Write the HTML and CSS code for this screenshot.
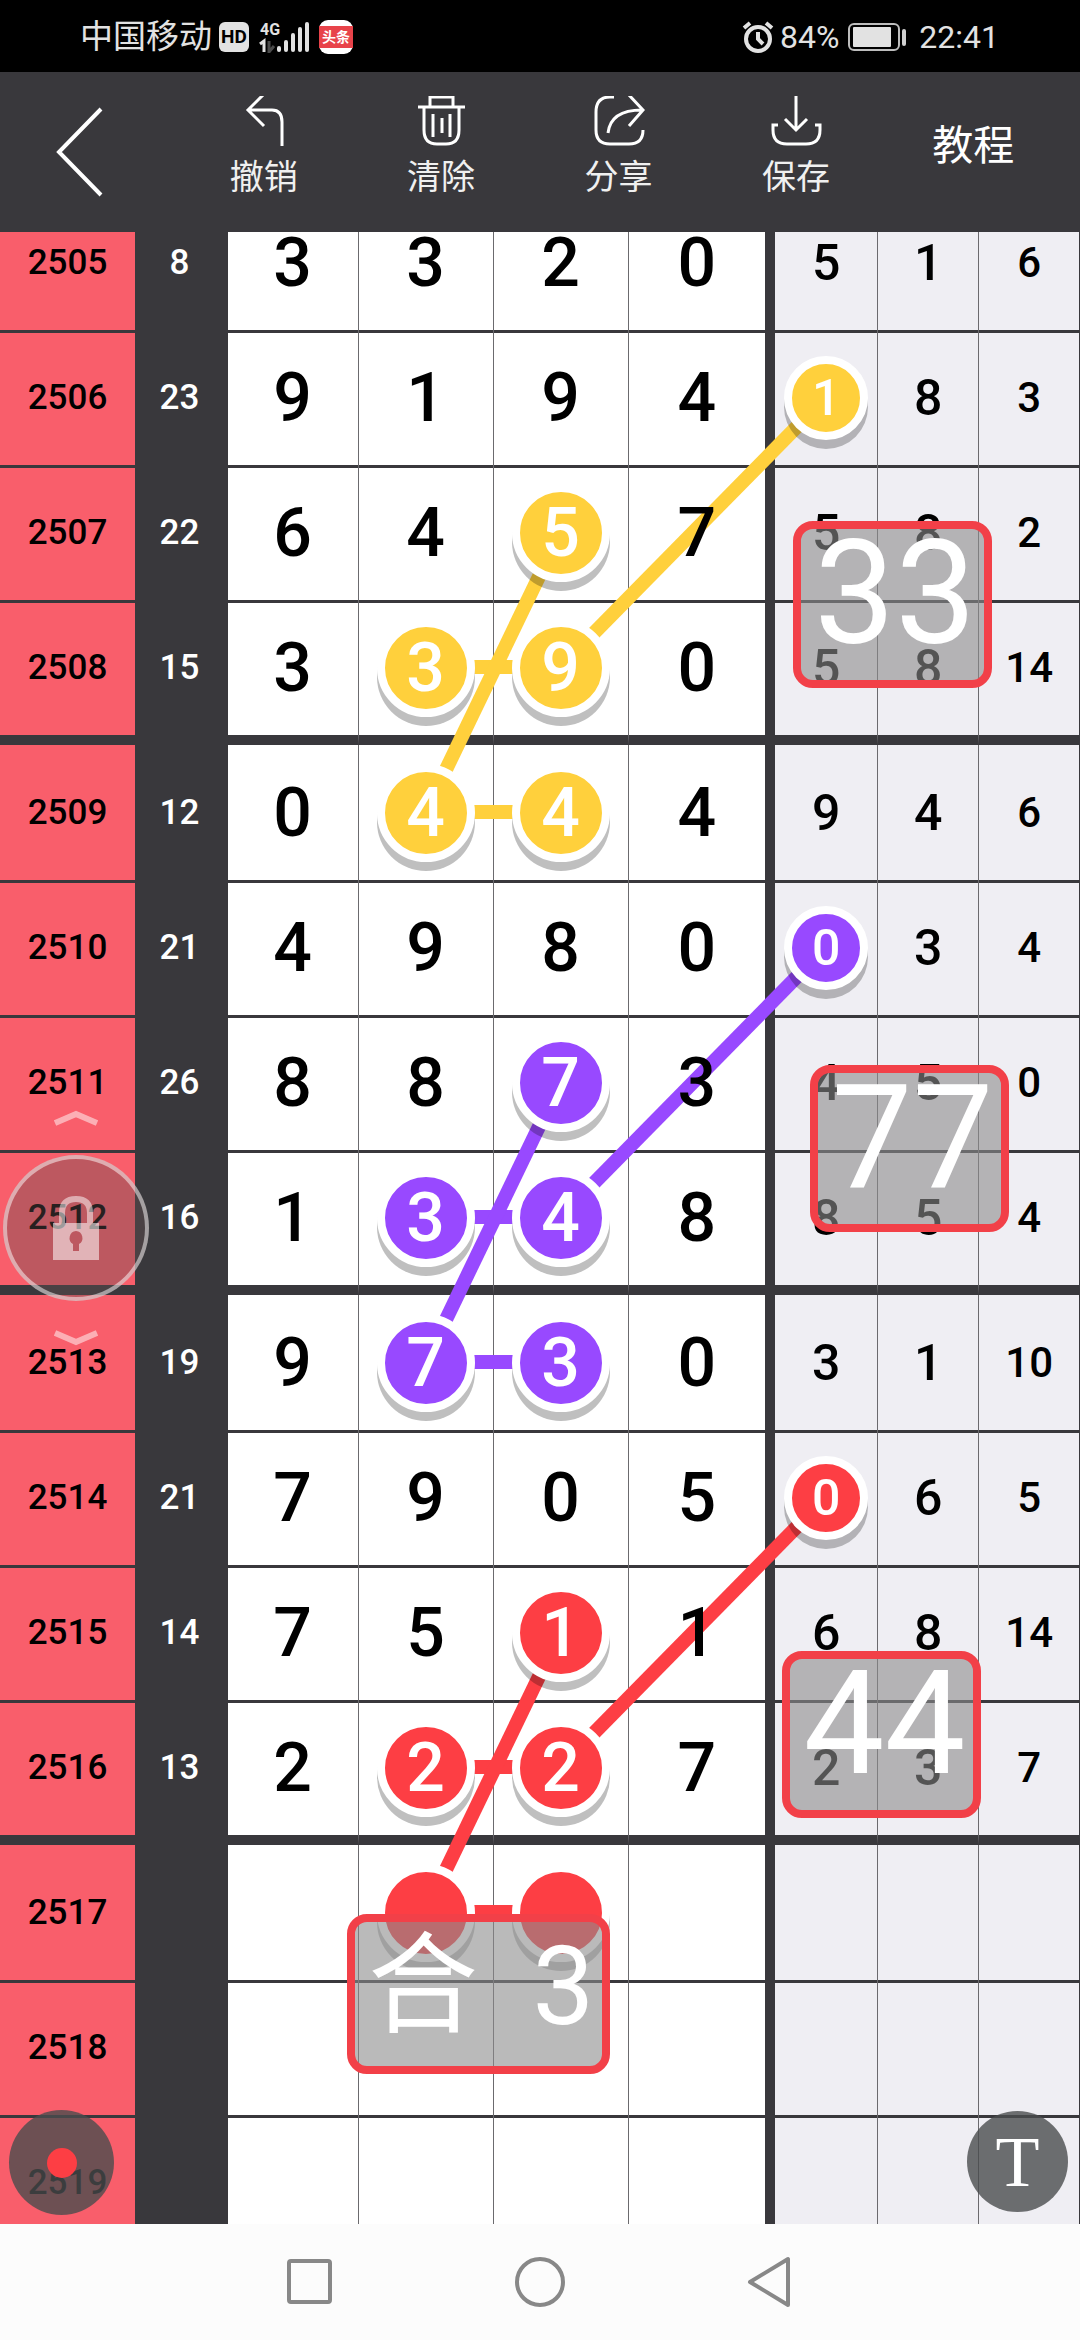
FILE: index.html
```html
<!DOCTYPE html>
<html lang="zh-CN">
<head>
<meta charset="utf-8">
<meta name="viewport" content="width=device-width, initial-scale=1">
<title>走势图</title>
<link rel="stylesheet" href="styles.css">
</head>
<body>
<div class="status">
  <div class="status-side">
    <span class="carrier">中国移动</span>
    <span class="hd">HD</span>
    <svg class="signal" width="52" height="32" viewBox="0 0 52 32" aria-hidden="true">
      <text x="1" y="14" class="signal-net">4G</text>
      <path d="M1 23L5 20V31" fill="none" stroke="#e2e2e2" stroke-width="3"/>
      <path d="M10 20V31L15 25" fill="none" stroke="#4a4a4a" stroke-width="3"/>
      <path d="M20 27V29M27 21V29M34 14V29M41 8V29M48 3V29" stroke="#e2e2e2" stroke-width="4" stroke-linecap="round"/>
    </svg>
    <span class="app-badge"><span>头条</span></span>
  </div>
  <div class="status-side">
    <svg width="32" height="34" viewBox="0 0 32 34" fill="none" stroke="#e2e2e2" aria-hidden="true">
      <circle cx="16" cy="19" r="12" stroke-width="4"/>
      <path d="M16 12V19L21 24" stroke-width="4"/>
      <path d="M2 8L8 3M24 3L30 8" stroke-width="4"/>
    </svg>
    <span class="percent">84%</span>
    <svg class="battery" width="60" height="28" viewBox="0 0 60 28" aria-hidden="true">
      <rect x="2" y="1" width="50" height="26" rx="5" fill="none" stroke="#bdbdbd" stroke-width="2"/>
      <rect x="6" y="4" width="38" height="20" rx="1" fill="#e2e2e2"/>
      <rect x="55" y="6" width="4" height="17" rx="2" fill="#d0d0d0"/>
    </svg>
    <span>22:41</span>
  </div>
</div>

<header class="toolbar">
  <button class="back" aria-label="返回">
    <svg width="48" height="90" viewBox="0 0 48 90"><path d="M45 2L3 45L45 88"/></svg>
  </button>
  <button class="tool">
    <svg width="52" height="50" viewBox="0 0 52 50"><path d="M26 -2L10 14L26 30M10 14H34Q44 14 44 26V50"/></svg>
    <span>撤销</span>
  </button>
  <button class="tool">
    <svg width="52" height="50" viewBox="0 0 52 50"><path d="M3 11H50M15 11V1H38V11M9 11V34Q9 48 22 48H31Q44 48 44 34V11M18 18V41M27 22V37M35 18V41"/></svg>
    <span>清除</span>
  </button>
  <button class="tool">
    <svg width="52" height="50" viewBox="0 0 52 50"><path d="M21 1H17Q3 1 3 16V34Q3 48 17 48H36Q50 48 50 34M15 37C17 20 30 14 49 14M35 -2L50 14L36 30"/></svg>
    <span>分享</span>
  </button>
  <button class="tool">
    <svg width="52" height="50" viewBox="0 0 52 50"><path d="M26 0V34M15 23L26 34L37 23M8 29H3V34Q3 48 17 48H36Q50 48 50 34V29H45"/></svg>
    <span>保存</span>
  </button>
  <button class="tool guide">教程</button>
</header>

<main class="sheet">
  <div class="canvas">
    <table class="chart">
      <colgroup>
        <col class="w-id"><col class="w-sum"><col class="w-first"><col class="w-digit"><col class="w-digit"><col class="w-fourth"><col class="w-fifth"><col class="w-sixth"><col class="w-last">
      </colgroup>
      <tbody>
        <tr><th scope="row"><span>2505</span></th><td><span>8</span></td><td><span>3</span></td><td><span>3</span></td><td><span>2</span></td><td><span>0</span></td><td><span>5</span></td><td><span>1</span></td><td><span>6</span></td></tr>
        <tr><th scope="row"><span>2506</span></th><td><span>23</span></td><td><span>9</span></td><td><span>1</span></td><td><span>9</span></td><td><span>4</span></td><td class="hit yellow"><i class="ball small"></i><span>1</span></td><td><span>8</span></td><td><span>3</span></td></tr>
        <tr><th scope="row"><span>2507</span></th><td><span>22</span></td><td><span>6</span></td><td><span>4</span></td><td class="hit yellow"><i class="ball"></i><span>5</span></td><td><span>7</span></td><td><span>5</span></td><td><span>8</span></td><td><span>2</span></td></tr>
        <tr><th scope="row"><span>2508</span></th><td><span>15</span></td><td><span>3</span></td><td class="hit yellow"><i class="ball low"></i><span>3</span></td><td class="hit yellow"><i class="ball low"></i><span>9</span></td><td><span>0</span></td><td><span>5</span></td><td><span>8</span></td><td><span>14</span></td></tr>
      </tbody>
      <tbody>
        <tr><th scope="row"><span>2509</span></th><td><span>12</span></td><td><span>0</span></td><td class="hit yellow"><i class="ball"></i><span>4</span></td><td class="hit yellow"><i class="ball"></i><span>4</span></td><td><span>4</span></td><td><span>9</span></td><td><span>4</span></td><td><span>6</span></td></tr>
        <tr><th scope="row"><span>2510</span></th><td><span>21</span></td><td><span>4</span></td><td><span>9</span></td><td><span>8</span></td><td><span>0</span></td><td class="hit purple"><i class="ball small"></i><span>0</span></td><td><span>3</span></td><td><span>4</span></td></tr>
        <tr><th scope="row"><span>2511</span></th><td><span>26</span></td><td><span>8</span></td><td><span>8</span></td><td class="hit purple"><i class="ball"></i><span>7</span></td><td><span>3</span></td><td><span>4</span></td><td><span>5</span></td><td><span>0</span></td></tr>
        <tr><th scope="row"><span>2512</span></th><td><span>16</span></td><td><span>1</span></td><td class="hit purple"><i class="ball low"></i><span>3</span></td><td class="hit purple"><i class="ball low"></i><span>4</span></td><td><span>8</span></td><td><span>8</span></td><td><span>5</span></td><td><span>4</span></td></tr>
      </tbody>
      <tbody>
        <tr><th scope="row"><span>2513</span></th><td><span>19</span></td><td><span>9</span></td><td class="hit purple"><i class="ball"></i><span>7</span></td><td class="hit purple"><i class="ball"></i><span>3</span></td><td><span>0</span></td><td><span>3</span></td><td><span>1</span></td><td><span>10</span></td></tr>
        <tr><th scope="row"><span>2514</span></th><td><span>21</span></td><td><span>7</span></td><td><span>9</span></td><td><span>0</span></td><td><span>5</span></td><td class="hit red"><i class="ball small"></i><span>0</span></td><td><span>6</span></td><td><span>5</span></td></tr>
        <tr><th scope="row"><span>2515</span></th><td><span>14</span></td><td><span>7</span></td><td><span>5</span></td><td class="hit red"><i class="ball"></i><span>1</span></td><td><span>1</span></td><td><span>6</span></td><td><span>8</span></td><td><span>14</span></td></tr>
        <tr><th scope="row"><span>2516</span></th><td><span>13</span></td><td><span>2</span></td><td class="hit red"><i class="ball low"></i><span>2</span></td><td class="hit red"><i class="ball low"></i><span>2</span></td><td><span>7</span></td><td><span>2</span></td><td><span>3</span></td><td><span>7</span></td></tr>
      </tbody>
      <tbody>
        <tr><th scope="row"><span>2517</span></th><td></td><td></td><td class="hit red"><i class="ball"></i></td><td class="hit red"><i class="ball"></i></td><td></td><td></td><td></td><td></td></tr>
        <tr><th scope="row"><span>2518</span></th><td></td><td></td><td></td><td></td><td></td><td></td><td></td><td></td></tr>
        <tr><th scope="row"><span>2519</span></th><td></td><td></td><td></td><td></td><td></td><td></td><td></td><td></td></tr>
      </tbody>
    </table>

    <svg class="links links-back" aria-hidden="true">
      <g class="yellow"><line x1="76.5%" y1="202" x2="51.9%" y2="472"/><line x1="39.4%" y1="472" x2="51.9%" y2="472"/><line x1="39.4%" y1="617" x2="51.9%" y2="617"/></g>
      <g class="purple" transform="translate(0 550)"><line x1="76.5%" y1="202" x2="51.9%" y2="472"/><line x1="39.4%" y1="472" x2="51.9%" y2="472"/><line x1="39.4%" y1="617" x2="51.9%" y2="617"/></g>
      <g class="red" transform="translate(0 1100)"><line x1="76.5%" y1="202" x2="51.9%" y2="472"/><line x1="39.4%" y1="472" x2="51.9%" y2="472"/><line x1="39.4%" y1="617" x2="51.9%" y2="617"/></g>
    </svg>
    <svg class="links links-front" aria-hidden="true">
      <line class="yellow" x1="51.9%" y1="337" x2="39.4%" y2="617"/>
      <line class="purple" x1="51.9%" y1="887" x2="39.4%" y2="1167"/>
      <line class="red" x1="51.9%" y1="1437" x2="39.4%" y2="1717"/>
    </svg>

    <div class="note note-a">33</div>
    <div class="note note-b">77</div>
    <div class="note note-c">44</div>
    <div class="note note-d">合&nbsp;&nbsp;3</div>
  </div>

  <div class="lock">
    <svg width="44" height="18" viewBox="0 0 44 18"><path d="M1 13L22 4L43 13"/></svg>
    <button aria-label="锁定">
      <svg width="46" height="64" viewBox="0 0 46 64">
        <path class="shackle" d="M9 27V17Q9 3 23 3Q37 3 37 17V27"/>
        <path class="body" fill-rule="evenodd" d="M0 27H46V64H0ZM23 35A7 7 0 0 0 20 48V55H26V48A7 7 0 0 0 23 35Z"/>
      </svg>
    </button>
    <svg width="44" height="18" viewBox="0 0 44 18"><path d="M1 5L22 14L43 5"/></svg>
  </div>
  <button class="round record" aria-label="画笔颜色"><i></i></button>
  <button class="round type" aria-label="添加文字">T</button>
</main>

<nav class="system">
  <button aria-label="最近任务"><svg width="50" height="54" viewBox="0 0 50 54"><rect x="4" y="6" width="41" height="41" rx="2"/></svg></button>
  <button aria-label="主页"><svg width="50" height="54" viewBox="0 0 50 54"><circle cx="25" cy="27" r="23"/></svg></button>
  <button aria-label="返回"><svg width="50" height="54" viewBox="0 0 50 54"><path d="M5 27L43 4V50Z"/></svg></button>
</nav>
</body>
</html>
```
FILE: styles.css
```css
:root {
  --dark: #39383c;
  --pink: #f95e6b;
  --yellow: #ffd03c;
  --purple: #9849ff;
  --red: #fd3e44;
}

* {
  box-sizing: border-box;
}

body {
  margin: 0;
  height: 100vh;
  display: flex;
  flex-direction: column;
  overflow: hidden;
  background: var(--dark);
  font-family: Roboto, "Noto Sans CJK SC", sans-serif;
}

button {
  margin: 0;
  padding: 0;
  border: 0;
  background: none;
  color: inherit;
  font: inherit;
}

svg {
  display: block;
}

/* Status bar */
.status {
  flex: none;
  height: 72px;
  padding: 2px 81px 0 80px;
  display: flex;
  align-items: center;
  justify-content: space-between;
  background: #000;
  color: #e2e2e2;
  font-size: 32px;
  line-height: 40px;
}

.status-side {
  display: flex;
  align-items: center;
}

.carrier {
  font-size: 33px;
}

.hd {
  width: 30px;
  height: 30px;
  margin: 0 10px 0 7px;
  border-radius: 6px;
  background: #e2e2e2;
  color: #000;
  font-size: 19px;
  font-weight: 700;
  line-height: 30px;
  text-align: center;
}

.signal-net {
  fill: #e2e2e2;
  font-size: 16px;
  font-weight: 700;
}

.app-badge {
  width: 34px;
  height: 34px;
  margin-left: 8px;
  padding: 6px 0;
  border-radius: 9px;
  background: #fff;
  text-align: center;
}

.app-badge span {
  display: block;
  background: #e8434a;
  color: #fff;
  font-size: 14px;
  font-weight: 700;
  line-height: 22px;
}

.percent {
  margin-left: 6px;
}

.battery {
  margin: 0 12px 0 8px;
}

/* Toolbar */
.toolbar {
  flex: none;
  height: 160px;
  padding-right: 18px;
  display: flex;
  color: #fff;
}

.toolbar svg {
  fill: none;
  stroke: #fff;
  stroke-width: 3px;
}

.toolbar .back svg {
  stroke-width: 4px;
}

.back {
  width: 175px;
  padding: 0 0 0 56px;
}

.tool {
  flex: 1;
  padding-top: 24px;
  display: flex;
  flex-direction: column;
  align-items: center;
  gap: 13px;
  color: #f0f0f0;
  font-size: 34px;
  line-height: 36px;
}

.guide {
  padding: 0 0 12px;
  justify-content: center;
  color: #fff;
  font-size: 41px;
}

/* Chart */
.sheet {
  flex: 1;
  min-height: 0;
  position: relative;
  overflow: hidden;
}

.canvas {
  position: relative;
  margin-top: -37px;
}

.chart {
  width: 100%;
  table-layout: fixed;
  border-collapse: separate;
  border-spacing: 0;
}

.w-id { width: 12.5%; }
.w-sum { width: 8.6%; }
.w-first { width: 12.1%; }
.w-digit { width: 12.5%; }
.w-fourth { width: 13.6%; }
.w-fifth { width: 9.5%; }
.w-sixth { width: 9.4%; }
.w-last { width: 9.3%; }

.chart th,
.chart td {
  position: relative;
  height: 135px;
  padding: 0;
  background: #fff;
  border-right: 1px solid #6b6a6e;
  color: #000;
  font-size: 68px;
  font-weight: 500;
  line-height: 1;
  text-align: center;
  vertical-align: middle;
}

.chart th {
  background: var(--pink);
  border-right: 0;
  font-size: 35px;
}

.chart td:nth-child(2) {
  padding-right: 4px;
  background: var(--dark);
  border-right: 0;
  color: #fff;
  font-size: 35px;
}

.chart td:nth-child(6) {
  border-right: 10px solid var(--dark);
}

.chart td:nth-child(n+7) {
  background: #efeef3;
  font-size: 50px;
}

.chart td:nth-child(9) {
  border-right-color: var(--dark);
  font-size: 42px;
}

.chart tr:not(:first-child) > * {
  box-shadow: inset 0 3px var(--dark);
}

.chart tbody:not(:last-child) tr:last-child > * {
  height: 145px;
  border-bottom: 10px solid var(--dark);
}

.chart span {
  position: relative;
  z-index: 5;
}

.chart .hit span {
  color: #fff;
}

/* Marked numbers */
.yellow { --mark: var(--yellow); }
.purple { --mark: var(--purple); }
.red { --mark: var(--red); }

.ball {
  position: absolute;
  z-index: 4;
  top: 50%;
  left: 50%;
  width: 98px;
  height: 98px;
  border: 8px solid #fff;
  border-radius: 50%;
  background: var(--mark);
  box-shadow: 0 9px rgba(0, 0, 0, 0.25);
  transform: translate(-50%, -50%);
}

.ball.low {
  z-index: 2;
}

.ball.small {
  width: 84px;
  height: 84px;
}

.links {
  position: absolute;
  inset: 0;
  width: 100%;
  height: 100%;
}

.links line {
  stroke: var(--mark);
  stroke-width: 14px;
}

.links-back { z-index: 1; }
.links-front { z-index: 3; }

/* Text notes laid over the chart */
.note {
  position: absolute;
  z-index: 6;
  width: 199px;
  height: 167px;
  padding-left: 6px;
  border: 8px solid #f24048;
  border-radius: 20px;
  background: rgba(140, 140, 140, 0.6);
  color: #fff;
  font-size: 144px;
  line-height: 130px;
  text-align: center;
  white-space: nowrap;
}

.note-a { left: 73.4%; top: 326px; }
.note-b { left: 75%; top: 870px; }
.note-c { left: 72.4%; top: 1456px; }

.note-d {
  left: 32.1%;
  top: 1719px;
  width: 263px;
  height: 160px;
  font-size: 110px;
}

/* Floating controls */
.lock {
  position: absolute;
  z-index: 7;
  top: 50%;
  left: 3px;
  display: flex;
  flex-direction: column;
  align-items: center;
  gap: 27px;
  transform: translateY(-50%);
}

.lock > svg {
  fill: none;
  stroke: rgba(255, 255, 255, 0.5);
  stroke-width: 6px;
}

.lock button {
  width: 146px;
  height: 146px;
  display: grid;
  place-items: center;
  border: 4px solid rgba(255, 255, 255, 0.5);
  border-radius: 50%;
  background: rgba(100, 80, 80, 0.4);
}

.shackle {
  fill: none;
  stroke: rgba(255, 255, 255, 0.5);
  stroke-width: 6px;
}

.body {
  fill: rgba(255, 255, 255, 0.55);
}

.round {
  position: absolute;
  z-index: 7;
  display: grid;
  place-items: center;
  border-radius: 50%;
  background: rgba(74, 76, 77, 0.8);
  color: #fff;
}

.record {
  left: 9px;
  bottom: 9px;
  width: 105px;
  height: 105px;
}

.record i {
  width: 30px;
  height: 30px;
  border-radius: 50%;
  background: var(--red);
}

.type {
  right: 12px;
  bottom: 12px;
  width: 101px;
  height: 101px;
  font-family: "Liberation Serif", serif;
  font-size: 72px;
  line-height: 1;
}

/* System navigation */
.system {
  flex: none;
  height: 116px;
  display: flex;
  align-items: center;
  justify-content: center;
  gap: 180px;
  background: #fcfcfc;
}

.system svg {
  fill: none;
  stroke: #888;
  stroke-width: 4px;
  stroke-linejoin: round;
}
```
